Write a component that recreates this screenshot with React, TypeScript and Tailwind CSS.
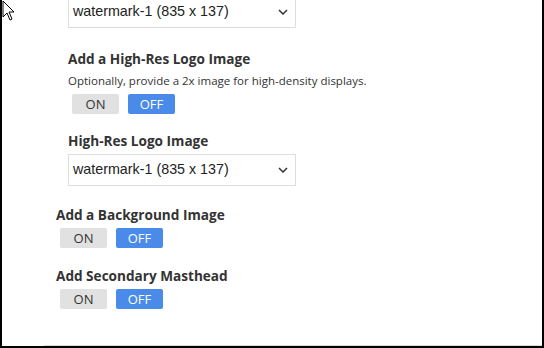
import React from 'react';

const FONT = "font-['Open_Sans',sans-serif]";

const Toggle = () => (
  <div className="flex gap-[9px]">
    <button className="w-[47px] h-[20px] rounded-[2px] bg-[#e1e1e1] text-[13px] leading-[20px] text-[#333] text-center">
      ON
    </button>
    <button className="w-[47px] h-[20px] rounded-[2px] bg-[#4a8ae8] text-[13px] leading-[20px] text-white text-center">
      OFF
    </button>
  </div>
);

const Select = ({ className = '' }: { className?: string }) => (
  <div
    className={`w-[228px] h-[32px] flex items-center justify-between border border-[#dedede] bg-white pl-[4px] pr-[7px] ${className}`}
  >
    <span className="font-['Liberation_Sans',Arial,sans-serif] text-[14.3px] text-[#222]">
      watermark-1 (835 x 137)
    </span>
    <svg width="10" height="6" viewBox="0 0 10 6" fill="none">
      <path d="M1 1l4 4 4-4" stroke="#333" strokeWidth="1.5" />
    </svg>
  </div>
);

export default function App() {
  return (
    <div className={`relative w-[544px] h-[348px] bg-white overflow-hidden border-l-2 border-r-2 border-b-2 border-black ${FONT}`}>
      {/* mouse pointer */}
      <svg className="absolute left-0 top-0" width="14" height="24" viewBox="0 0 14 24">
        <path d="M1 1v16l4-4 3 7 2-1-3-7h5z" fill="#fff" stroke="#000" strokeWidth="1" />
      </svg>

      <div className="ml-[42px] h-[346px] border-b border-[#dcdcdc] flex flex-col">
        <div className="pl-[24px] flex flex-col">
          <Select className="mt-[-4px]" />
          <h3 className="mt-[21px] text-[13.6px] leading-[20px] font-bold text-[#333]">
            Add a High-Res Logo Image
          </h3>
          <p className="mt-[4px] text-[11.5px] leading-[16px] text-[#333]">
            Optionally, provide a 2x image for high-density displays.
          </p>
          <div className="mt-[5px] pl-[4px]">
            <Toggle />
          </div>
          <h3 className="mt-[17px] text-[13.6px] leading-[20px] font-bold text-[#333]">
            High-Res Logo Image
          </h3>
          <Select className="mt-[3px]" />
        </div>

        <div className="pl-[12px] flex flex-col">
          <h3 className="mt-[19px] text-[13.6px] leading-[20px] font-bold text-[#333]">
            Add a Background Image
          </h3>
          <div className="mt-[3px] pl-[4px]">
            <Toggle />
          </div>
          <h3 className="mt-[18px] text-[13.6px] leading-[20px] font-bold text-[#333]">
            Add Secondary Masthead
          </h3>
          <div className="mt-[3px] pl-[4px]">
            <Toggle />
          </div>
        </div>
      </div>
    </div>
  );
}
